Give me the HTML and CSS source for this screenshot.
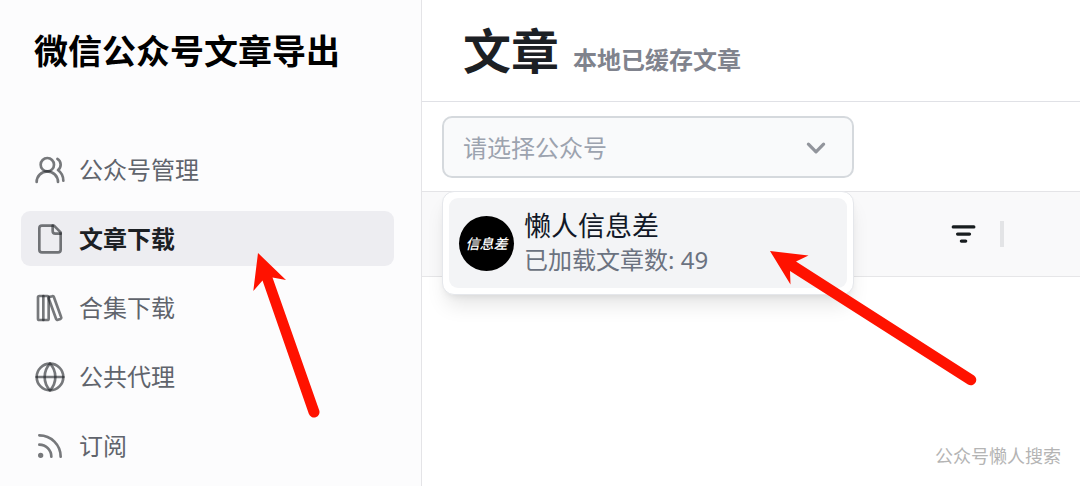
FILE: index.html
```html
<!DOCTYPE html>
<html lang="zh-CN">
<head>
<meta charset="utf-8">
<meta name="viewport" content="width=device-width, initial-scale=1">
<title>微信公众号文章导出</title>
<link rel="stylesheet" href="styles.css">
</head>
<body>
<div class="app">
  <aside class="sidebar">
    <h2 class="brand">微信公众号文章导出</h2>
    <nav class="nav">
      <a class="nav-link" href="#accounts">
        <svg class="icon" viewBox="0 0 24 24" aria-hidden="true"><path d="M18 21a8 8 0 0 0-16 0"/><circle cx="10" cy="8" r="5"/><path d="M22 20c0-3.37-2-6.5-4-8a5 5 0 0 0-.45-8.3"/></svg>
        <span>公众号管理</span>
      </a>
      <a class="nav-link active" href="#articles" aria-current="page">
        <svg class="icon" viewBox="0 0 24 24" aria-hidden="true"><path d="M15 2H6a2 2 0 0 0-2 2v16a2 2 0 0 0 2 2h12a2 2 0 0 0 2-2V7Z"/><path d="M14 2v4a2 2 0 0 0 2 2h4"/></svg>
        <span>文章下载</span>
      </a>
      <a class="nav-link" href="#albums">
        <svg class="icon" viewBox="0 0 24 24" aria-hidden="true"><rect width="8" height="18" x="3" y="3" rx="1"/><path d="M7 3v18"/><path d="M20.4 18.9c.2.5-.1 1.1-.6 1.3l-1.9.7c-.5.2-1.1-.1-1.3-.6L11.1 5.1c-.2-.5.1-1.1.6-1.3l1.9-.7c.5-.2 1.1.1 1.3.6Z"/></svg>
        <span>合集下载</span>
      </a>
      <a class="nav-link" href="#proxy">
        <svg class="icon" viewBox="0 0 24 24" aria-hidden="true"><circle cx="12" cy="12" r="10"/><path d="M12 2a14.5 14.5 0 0 0 0 20 14.5 14.5 0 0 0 0-20"/><path d="M2 12h20"/></svg>
        <span>公共代理</span>
      </a>
      <a class="nav-link" href="#feeds">
        <svg class="icon" viewBox="0 0 24 24" aria-hidden="true"><path d="M4 11a9 9 0 0 1 9 9"/><path d="M4 4a16 16 0 0 1 16 16"/><circle cx="5" cy="19" r="1"/></svg>
        <span>订阅</span>
      </a>
    </nav>
  </aside>
  <main class="main">
    <header class="page-head">
      <h1 class="page-title">文章</h1>
      <p class="page-note">本地已缓存文章</p>
    </header>
    <div class="toolbar">
      <div class="picker">
        <select class="picker-select" aria-label="公众号">
          <option>请选择公众号</option>
        </select>
        <svg class="chevron" viewBox="0 0 24 24" aria-hidden="true"><path d="m5 8.500 7 7 7-7"/></svg>
        <ul class="menu">
          <li>
            <button class="account" type="button">
              <span class="avatar">信息差</span>
              <span class="account-text">
                <span class="account-name">懒人信息差</span>
                <span class="account-count">已加载文章数: 49</span>
              </span>
            </button>
          </li>
        </ul>
      </div>
    </div>
    <div class="grid-head">
      <button class="filter" type="button" aria-label="筛选">
        <svg class="filter-icon" viewBox="0 0 24 24" aria-hidden="true"><path d="M3 5.500h19M7 12h11M10.500 18.500h4"/></svg>
      </button>
      <span class="resizer"></span>
    </div>
  </main>
  <svg class="arrow" width="1080" height="486" aria-hidden="true">
    <path d="M258 253 286 280 272.500 277.500 319.200 410.200A5.500 5.500 0 0 1 308.800 413.800L262.500 280.500 253.300 291Z"/>
    <path d="M770 251 808.500 255.500 796 261.500 974 375.400A5.500 5.500 0 0 1 968 384.600L790 271 790.500 284.500Z"/>
  </svg>
  <span class="watermark">公众号懒人搜索</span>
</div>
</body>
</html>
```
FILE: styles.css
```css
* {
  box-sizing: border-box;
}

body {
  margin: 0;
  background: #fff;
  font-family: "Noto Sans", "Noto Sans CJK SC", sans-serif;
}

h1, h2, p, ul {
  margin: 0;
  padding: 0;
}

.app {
  position: relative;
  display: grid;
  grid-template-columns: 422px minmax(0, 1fr);
  min-height: 100vh;
  overflow: hidden;
}

/* Sidebar */
.sidebar {
  background: #fcfcfd;
  border-right: 1px solid #e4e4e7;
}

.brand {
  padding: 27px 34px 67px;
  color: #000;
  font-size: 34px;
  font-weight: 700;
  line-height: 48px;
}

.nav {
  display: flex;
  flex-direction: column;
  gap: 14px;
  padding: 0 27px 0 21px;
}

.nav-link {
  display: flex;
  align-items: center;
  gap: 13px;
  height: 55px;
  padding: 0 13px;
  border-radius: 9px;
  color: #60646c;
  font-size: 24px;
  line-height: 36px;
  text-decoration: none;
}

.nav-link.active {
  background: #ededf1;
  color: #1c2024;
  font-weight: 700;
}

.icon {
  width: 32px;
  height: 32px;
  fill: none;
  stroke: rgba(28, 32, 36, 0.6);
  stroke-width: 2;
  stroke-linecap: round;
  stroke-linejoin: round;
}

/* Main column */
.page-head {
  display: flex;
  align-items: baseline;
  gap: 14px;
  height: 102px;
  padding: 16px 41px 0;
  border-bottom: 1px solid #e0e1e6;
}

.page-title {
  color: #1c2024;
  font-size: 48px;
  font-weight: 700;
  line-height: 70px;
}

.page-note {
  color: #80838d;
  font-size: 24px;
  font-weight: 700;
  line-height: 36px;
}

.toolbar {
  height: 90px;
  padding: 14px 20px;
  border-bottom: 1px solid #e4e4e7;
}

.picker {
  position: relative;
  width: 412px;
}

.picker-select {
  width: 100%;
  height: 62px;
  padding: 0 19px;
  appearance: none;
  border: 2px solid #d5d9dd;
  border-radius: 10px;
  background: #f9fafb;
  color: #9ca3af;
  font: inherit;
  font-size: 24px;
}

.chevron {
  position: absolute;
  top: 19px;
  right: 25px;
  width: 26px;
  height: 26px;
  fill: none;
  stroke: #92959c;
  stroke-width: 3;
  stroke-linecap: round;
  stroke-linejoin: round;
}

.menu {
  position: absolute;
  z-index: 1;
  top: 75px;
  left: 0;
  width: 100%;
  padding: 6px;
  border: 1px solid #e5e7eb;
  border-radius: 12px;
  background: #fff;
  box-shadow: 0 14px 20px -4px rgba(0, 0, 0, 0.1), 0 4px 8px -4px rgba(0, 0, 0, 0.1);
  list-style: none;
}

.account {
  display: flex;
  align-items: center;
  gap: 10px;
  width: 100%;
  height: 90px;
  padding: 0 10px;
  border: 0;
  border-radius: 9px;
  background: #f3f4f6;
  font: inherit;
  text-align: left;
}

.avatar {
  display: grid;
  place-items: center;
  width: 55px;
  height: 55px;
  border-radius: 50%;
  background: #000;
  color: #fff;
  font-size: 14px;
  font-style: italic;
  font-weight: 500;
}

.account-text {
  display: flex;
  flex-direction: column;
}

.account-name {
  color: #111827;
  font-size: 27px;
  line-height: 34px;
}

.account-count {
  color: #6b7280;
  font-size: 24px;
  line-height: 34px;
}

.grid-head {
  display: flex;
  align-items: center;
  justify-content: flex-end;
  gap: 24px;
  height: 85px;
  padding-right: 76px;
  border-bottom: 1px solid #e6e6e8;
  background: #f9f9fa;
}

.filter {
  display: grid;
  padding: 0;
  border: 0;
  background: none;
}

.filter-icon {
  width: 26px;
  height: 26px;
  fill: none;
  stroke: #181d1f;
  stroke-width: 3;
  stroke-linecap: round;
}

.resizer {
  width: 4px;
  height: 26px;
  background: #e3e4e6;
}

/* Callouts drawn over the page */
.arrow {
  position: absolute;
  z-index: 2;
  top: 0;
  left: 0;
  fill: #ff1200;
  pointer-events: none;
}

.watermark {
  position: absolute;
  right: 19px;
  bottom: 17px;
  color: #b4b4b4;
  font-size: 18px;
  line-height: 26px;
}
```
